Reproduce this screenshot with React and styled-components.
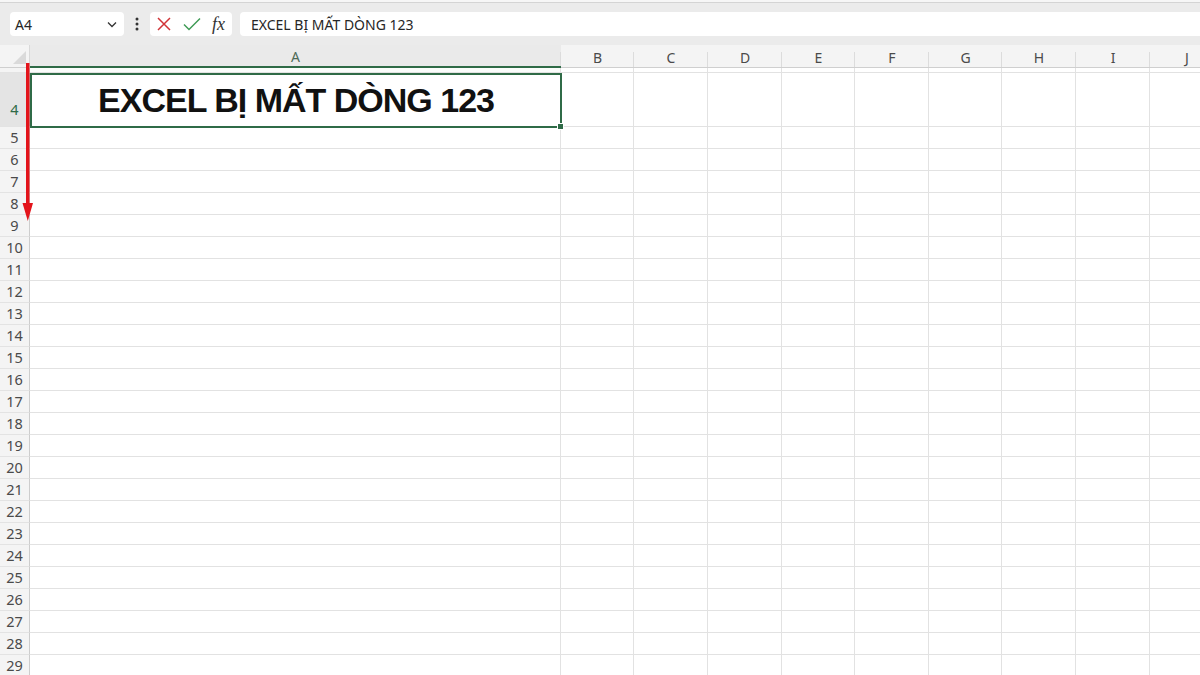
import React from 'react'
import styled, { createGlobalStyle } from 'styled-components'

const GlobalStyle = createGlobalStyle`
  html, body {
    margin: 0;
    padding: 0;
    background: #ebebeb;
    overflow: hidden;
    font-family: "Noto Sans", "Liberation Sans", sans-serif;
  }
`

const COLS = [
  { key: 'A', w: 531 },
  { key: 'B', w: 73 },
  { key: 'C', w: 74 },
  { key: 'D', w: 74 },
  { key: 'E', w: 73 },
  { key: 'F', w: 74 },
  { key: 'G', w: 73 },
  { key: 'H', w: 74 },
  { key: 'I', w: 74 },
  { key: 'J', w: 74 },
]

const template = `30px ${COLS.map(c => c.w + 'px').join(' ')}`

const Page = styled.div`
  width: 1200px;
  height: 675px;
  overflow: hidden;
  display: flex;
  flex-direction: column;
`

const TopStrip = styled.div`
  height: 2px;
  background: #f6f6f6;
  border-bottom: 1px solid #d4d4d4;
  flex-shrink: 0;
`

const FormulaBar = styled.div`
  display: flex;
  align-items: center;
  padding: 9px 0 0 10px;
  height: 24px;
  margin-bottom: 9px;
  flex-shrink: 0;
`

const NameBox = styled.div`
  width: 114px;
  height: 24px;
  box-sizing: border-box;
  background: #fff;
  border-radius: 4px;
  display: flex;
  align-items: center;
  justify-content: space-between;
  padding: 0 4px 0 5px;
  font-size: 14px;
  color: #262626;
`

const Dots = styled.div`
  width: 26px;
  display: flex;
  justify-content: center;
`

const ActionGroup = styled.div`
  width: 82px;
  height: 24px;
  background: #fff;
  border-radius: 4px;
  display: flex;
  align-items: center;
  padding-left: 5px;
  gap: 9px;
  box-sizing: border-box;
  margin-right: 8px;
`

const Fx = styled.span`
  font-family: "Liberation Serif", serif;
  font-style: italic;
  font-size: 18px;
  color: #333;
  margin-left: 1px;
  line-height: 1;
`

const FormulaInput = styled.div`
  flex: 1;
  height: 24px;
  background: #fff;
  border-radius: 4px 0 0 4px;
  display: flex;
  align-items: center;
  padding-left: 11px;
  font-size: 14px;
  color: #262626;
`

const Sheet = styled.div`
  position: relative;
  flex: 1;
  background: #fff;
`

const GridRow = styled.div`
  display: grid;
  grid-template-columns: ${template};
  height: ${p => p.$h}px;
`

const Corner = styled.div`
  background: #f4f4f4;
  border-right: 1px solid #d9d9d9;
  border-bottom: 1px solid #cfcfcf;
  position: relative;
  &::after {
    content: '';
    position: absolute;
    right: 3px;
    bottom: 3px;
    border-style: solid;
    border-width: 0 0 13px 13px;
    border-color: transparent transparent #dadada transparent;
  }
`

const ColHeader = styled.div`
  background: ${p => (p.$active ? '#eaeaea' : '#f4f4f4')};
  border-bottom: ${p => (p.$active ? '2px solid #2f6b47' : '1px solid #cfcfcf')};
  display: flex;
  align-items: center;
  justify-content: center;
  padding-top: 2px;
  box-sizing: border-box;
  font-size: 14px;
  color: ${p => (p.$active ? '#4e6b58' : '#4a4a4a')};
  position: relative;
  &::after {
    content: '';
    position: absolute;
    right: 0;
    top: 7px;
    bottom: 0;
    width: 1px;
    background: #dcdcdc;
  }
`

const RowHeader = styled.div`
  background: ${p => (p.$active ? '#e4e4e4' : '#f4f4f4')};
  border-right: 1px solid ${p => (p.$active ? '#b9b9b9' : '#cdcdcd')};
  border-bottom: 1px solid #e3e3e3;
  display: flex;
  align-items: flex-end;
  justify-content: center;
  padding-bottom: ${p => (p.$active ? 8 : 2)}px;
  box-sizing: border-box;
  font-size: 14.5px;
  color: ${p => (p.$active ? '#2f6b47' : '#4a4a4a')};
  line-height: 18px;
`

const Cell = styled.div`
  border-right: 1px solid #e2e2e2;
  border-bottom: 1px solid #e2e2e2;
  background: ${p => (p.$tint ? '#fbfdfb' : '#fff')};
`

const SelectedCell = styled.div`
  position: relative;
  border: 2px solid #2f6b47;
  margin: 0 -1px -1px 0;
  display: flex;
  align-items: center;
  justify-content: center;
  font-family: "Liberation Sans", Arial, sans-serif;
  font-weight: 700;
  font-size: 34px;
  letter-spacing: -1px;
  color: #111;
  z-index: 1;
  &::after {
    content: '';
    position: absolute;
    right: -4px;
    bottom: -4px;
    width: 5px;
    height: 5px;
    background: #2f6b47;
    border: 1px solid #fff;
  }
`

const Arrow = styled.svg`
  position: absolute;
  left: 21px;
  top: 18px;
  z-index: 2;
`

const ROWS = Array.from({ length: 25 }, (_, i) => i + 5)

export default function App() {
  return (
    <Page>
      <GlobalStyle />
      <TopStrip />
      <FormulaBar>
        <NameBox>
          <span>A4</span>
          <svg width="16" height="16" viewBox="0 0 16 16" fill="none" stroke="#333" strokeWidth="1.3">
            <path d="M4 6.5l4 4 4-4" />
          </svg>
        </NameBox>
        <Dots>
          <svg width="4" height="14" viewBox="0 0 4 14" fill="#333">
            <circle cx="2" cy="2" r="1.5" />
            <circle cx="2" cy="7" r="1.5" />
            <circle cx="2" cy="12" r="1.5" />
          </svg>
        </Dots>
        <ActionGroup>
          <svg width="18" height="18" viewBox="0 0 18 18" fill="none" stroke="#d13438" strokeWidth="1.5">
            <path d="M3 3l12 12M15 3L3 15" />
          </svg>
          <svg width="20" height="18" viewBox="0 0 20 18" fill="none" stroke="#3f9b56" strokeWidth="1.5">
            <path d="M2 9.5l5 5L18 3.5" />
          </svg>
          <Fx>fx</Fx>
        </ActionGroup>
        <FormulaInput>EXCEL BỊ MẤT DÒNG 123</FormulaInput>
      </FormulaBar>
      <Sheet>
        <GridRow $h={22}>
          <Corner />
          {COLS.map((c, i) => (
            <ColHeader key={c.key} $active={i === 0}>{c.key}</ColHeader>
          ))}
        </GridRow>
        <GridRow $h={6}>
          <RowHeader />
          {COLS.map((c, i) => (
            <Cell key={c.key} $tint={i === 0} />
          ))}
        </GridRow>
        <GridRow $h={54}>
          <RowHeader $active>4</RowHeader>
          <SelectedCell>EXCEL BỊ MẤT DÒNG 123</SelectedCell>
          {COLS.slice(1).map(c => (
            <Cell key={c.key} />
          ))}
        </GridRow>
        {ROWS.map(r => (
          <GridRow key={r} $h={22}>
            <RowHeader>{r}</RowHeader>
            {COLS.map(c => (
              <Cell key={c.key} />
            ))}
          </GridRow>
        ))}
        <Arrow width="14" height="160" viewBox="0 0 14 160">
          <rect x="5" y="0" width="3.5" height="144" fill="#e3141b" />
          <path d="M1.5 140 L12 140 L6.8 158 Z" fill="#e3141b" />
        </Arrow>
      </Sheet>
    </Page>
  )
}
